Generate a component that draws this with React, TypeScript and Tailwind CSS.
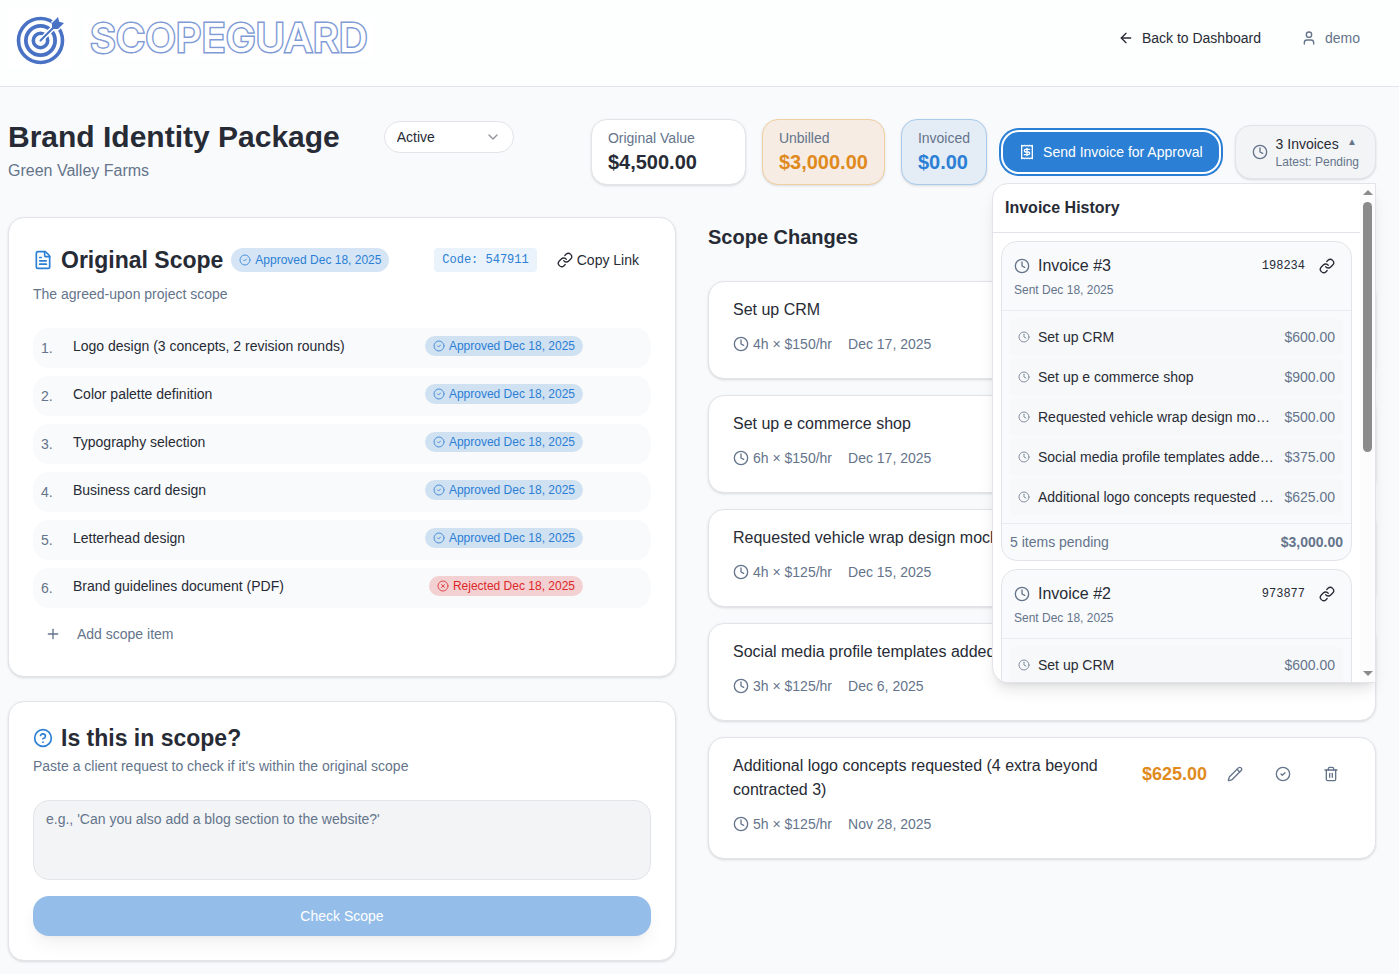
import { useId, type ReactNode } from "react";
import {
  ArrowLeft,
  ChevronDown,
  CircleCheck,
  CircleHelp,
  CircleX,
  Clock,
  FileText,
  Link,
  Pencil,
  Plus,
  Trash2,
  User,
} from "lucide-react";

type ScopeItem = { text: string; status: "Approved" | "Rejected" };
type Change = { title: string; hours: number; rate: number; date: string };
type InvoiceLine = { title: string; amount: number };
type Invoice = { number: number; code: string; sent: string; lines: InvoiceLine[] };

const scopeItems: ScopeItem[] = [
  { text: "Logo design (3 concepts, 2 revision rounds)", status: "Approved" },
  { text: "Color palette definition", status: "Approved" },
  { text: "Typography selection", status: "Approved" },
  { text: "Business card design", status: "Approved" },
  { text: "Letterhead design", status: "Approved" },
  { text: "Brand guidelines document (PDF)", status: "Rejected" },
];

const changes: Change[] = [
  { title: "Set up CRM", hours: 4, rate: 150, date: "Dec 17, 2025" },
  { title: "Set up e commerce shop", hours: 6, rate: 150, date: "Dec 17, 2025" },
  { title: "Requested vehicle wrap design mockup", hours: 4, rate: 125, date: "Dec 15, 2025" },
  { title: "Social media profile templates added to scope", hours: 3, rate: 125, date: "Dec 6, 2025" },
  {
    title: "Additional logo concepts requested (4 extra beyond contracted 3)",
    hours: 5,
    rate: 125,
    date: "Nov 28, 2025",
  },
];

const lines: InvoiceLine[] = changes.map((c) => ({ title: c.title, amount: c.hours * c.rate }));

const invoices: Invoice[] = [
  { number: 3, code: "198234", sent: "Dec 18, 2025", lines },
  { number: 2, code: "973877", sent: "Dec 18, 2025", lines: lines.slice(0, 4) },
];

const money = (value: number) =>
  "$" + value.toLocaleString("en-US", { minimumFractionDigits: 2, maximumFractionDigits: 2 });

function TargetLogo() {
  return (
    <svg viewBox="0 0 64 60" className="h-[60px] w-16" aria-hidden="true">
      <rect width="64" height="60" fill="#ffffff" />
      <g fill="none" stroke="#4a72c4">
        <circle cx="32.5" cy="32.5" r="22" strokeWidth="3.6" />
        <circle cx="32.5" cy="32.5" r="14.6" strokeWidth="3.8" />
        <circle cx="32.5" cy="32.5" r="7.2" strokeWidth="3.6" />
      </g>
      <path d="M32.5 32.5 49 16" stroke="#ffffff" strokeWidth="5" />
      <path d="M43 14 49 8 57 16 50 23Z" fill="#ffffff" />
      <path d="M32.5 32.5 48 17" stroke="#4a72c4" strokeWidth="2" strokeLinecap="round" />
      <path d="M44 19.5V15l6-6 1.2 4.8L56 15l-6 6h-4.6z" fill="#4a72c4" />
    </svg>
  );
}

function InvoiceIcon() {
  return (
    <svg
      viewBox="0 0 24 24"
      className="size-4"
      fill="none"
      stroke="currentColor"
      strokeWidth="2"
      strokeLinecap="round"
      strokeLinejoin="round"
      aria-hidden="true"
    >
      <path d="M4 2v20l2-1 2 1 2-1 2 1 2-1 2 1 2-1 2 1V2l-2 1-2-1-2 1-2-1-2 1-2-1-2 1Z" />
      <path d="M16 8h-6a2 2 0 1 0 0 4h4a2 2 0 1 1 0 4H8" />
      <path d="M12 17.5v-11" />
    </svg>
  );
}

function Card({ className = "", children }: { className?: string; children: ReactNode }) {
  return (
    <section className={`rounded-2xl border border-[#e2e4e9] bg-white shadow-sm ${className}`}>{children}</section>
  );
}

function StatusBadge({ status, className }: { status: ScopeItem["status"]; className: string }) {
  const approved = status === "Approved";
  const Icon = approved ? CircleCheck : CircleX;
  return (
    <span
      className={`inline-flex shrink-0 items-center gap-1 rounded-full px-2 text-xs ${
        approved ? "text-[#2b7fd4]" : "text-[#dc2828]"
      } ${className}`}
    >
      <Icon className="size-3 opacity-80" />
      {status} Dec 18, 2025
    </span>
  );
}

function Stat({ label, value, className }: { label: string; value: string; className: string }) {
  return (
    <div className={`rounded-2xl border py-2 pl-4 ${className}`}>
      <p className="text-sm text-[#64748b]">{label}</p>
      <p className="text-xl font-bold">{value}</p>
    </div>
  );
}

function Header() {
  return (
    <header className="border-b border-[#e2e4e9] bg-[#fdfefe] pt-2 pr-[23px] pb-[18px] pl-2">
      <div className="flex h-[60px] items-center justify-between">
        <a href="#home" className="flex items-center gap-3">
          <TargetLogo />
          <span className="bg-white px-1.5 font-['Inter'] text-[40px] leading-10 font-medium text-white [-webkit-text-stroke:3px_#7f9bd6] [paint-order:stroke_fill]">
            SCOPEGUARD
          </span>
        </a>
        <nav className="flex items-center gap-10 pr-4 text-sm">
          <a href="#dashboard" className="flex items-center gap-2">
            <ArrowLeft className="size-4" />
            Back to Dashboard
          </a>
          <span className="flex items-center gap-2 text-[#64748b]">
            <User className="size-4" />
            demo
          </span>
        </nav>
      </div>
    </header>
  );
}

function InvoiceCard({ invoice }: { invoice: Invoice }) {
  const total = invoice.lines.reduce((sum, line) => sum + line.amount, 0);
  return (
    <article className="overflow-hidden rounded-2xl border border-[#e2e4e9] bg-[#f9fafc]">
      <div className="border-b border-[#eaecf0] p-3">
        <div className="flex items-center justify-between">
          <h3 className="flex items-center gap-2">
            <Clock className="size-4 text-[#64748b]" />
            Invoice #{invoice.number}
          </h3>
          <div className="flex items-center gap-2.5">
            <code className="font-['Liberation_Mono',monospace] text-xs">{invoice.code}</code>
            <button type="button" aria-label="Copy invoice link" className="grid size-6 place-items-center">
              <Link className="size-4" />
            </button>
          </div>
        </div>
        <p className="mt-1 text-xs text-[#64748b]">Sent {invoice.sent}</p>
      </div>
      <ul className="flex flex-col gap-1 p-2 text-sm">
        {invoice.lines.map((line) => (
          <li key={line.title} className="flex items-center gap-2 rounded-sm bg-[#f7f8fa] p-2">
            <Clock className="size-3 shrink-0 text-[#64748b] opacity-80" />
            <span className="min-w-0 flex-1 truncate">{line.title}</span>
            <span className="text-[#64748b]">{money(line.amount)}</span>
          </li>
        ))}
      </ul>
      <div className="flex justify-between border-t border-[#eaecf0] p-2 text-sm text-[#64748b]">
        <span>{invoice.lines.length} items pending</span>
        <strong className="font-bold">{money(total)}</strong>
      </div>
    </article>
  );
}

function InvoiceHistory() {
  return (
    <div className="absolute top-full right-0 z-10 mt-1 flex h-[500px] w-96 overflow-hidden rounded-l-2xl border border-[#e2e4e9] bg-white shadow-lg">
      <div className="min-w-0 flex-1 overflow-y-auto [scrollbar-width:none]">
        <h2 className="border-b border-[#e2e4e9] p-3 font-bold">Invoice History</h2>
        <div className="flex flex-col gap-2 p-2">
          {invoices.map((invoice) => (
            <InvoiceCard key={invoice.number} invoice={invoice} />
          ))}
        </div>
      </div>
      <div className="flex w-[15px] flex-col items-center bg-[#fcfcfc] py-1.5" aria-hidden="true">
        <svg viewBox="0 0 10 5" className="h-[5px] w-2.5">
          <path d="M0 5 5 0l5 5z" fill="#8b8b8b" />
        </svg>
        <div className="mt-[7px] h-[250px] w-[9px] rounded-full bg-[#8b8b8b]" />
        <svg viewBox="0 0 10 5" className="mt-auto h-[5px] w-2.5">
          <path d="M0 0 5 5l5-5z" fill="#8b8b8b" />
        </svg>
      </div>
    </div>
  );
}

function ProjectBar() {
  return (
    <div className="flex items-center justify-between gap-4">
      <div className="flex flex-1 flex-col gap-1 self-start">
        <div className="flex items-center gap-11">
          <h1 className="text-3xl font-bold whitespace-nowrap">Brand Identity Package</h1>
          <div className="relative">
            <select
              aria-label="Project status"
              className="h-8 w-[130px] appearance-none rounded-full border border-[#e2e4e9] bg-white px-3 text-sm"
              defaultValue="Active"
            >
              <option>Active</option>
              <option>Completed</option>
            </select>
            <ChevronDown className="pointer-events-none absolute top-2 right-[13px] size-4 opacity-50" />
          </div>
        </div>
        <p className="text-[#64748b]">Green Valley Farms</p>
      </div>
      <Stat label="Original Value" value="$4,500.00" className="border-[#e2e4e9] bg-white pr-12 shadow-sm" />
      <Stat
        label="Unbilled"
        value="$3,000.00"
        className="border-[#f0cfa2] bg-[#f6ece3] pr-4 shadow-sm [&>p:last-child]:text-[#e08a1e]"
      />
      <Stat
        label="Invoiced"
        value="$0.00"
        className="border-[#aacbec] bg-[#e4ecf6] pr-4 shadow-sm [&>p:last-child]:text-[#2b7fd4]"
      />
      <button
        type="button"
        className="flex h-10 items-center gap-2 rounded-2xl bg-[#2b7fd4] px-4 text-sm whitespace-nowrap text-white ring-2 ring-[#2b7fd4] ring-offset-2"
      >
        <InvoiceIcon />
        Send Invoice for Approval
      </button>
      <div className="relative">
        <button
          type="button"
          aria-expanded="true"
          className="flex items-center gap-2 rounded-2xl border border-[#e2e4e9] bg-[#f3f4f6] px-4 py-2 text-left whitespace-nowrap shadow-sm"
        >
          <Clock className="size-4 text-[#64748b]" />
          <span className="flex flex-col">
            <span className="flex items-start justify-between text-sm">
              3 Invoices
              <span className="pr-0.5 text-[10px] leading-4 text-[#64748b]">▲</span>
            </span>
            <span className="text-xs text-[#64748b]">Latest: Pending</span>
          </span>
        </button>
        <InvoiceHistory />
      </div>
    </div>
  );
}

function OriginalScope() {
  return (
    <Card className="p-6">
      <div className="flex h-9 items-center justify-between">
        <div className="flex items-center gap-2">
          <FileText className="size-5 text-[#2b7fd4]" />
          <h2 className="text-[23px] leading-6 font-bold">Original Scope</h2>
          <StatusBadge status="Approved" className="h-6 bg-[#d5e5f6]" />
        </div>
        <div className="flex items-center gap-2">
          <code className="h-6 rounded bg-[#eaf2fb] px-2 font-['Liberation_Mono',monospace] text-xs leading-6 text-[#2b7fd4]">
            Code: 547911
          </code>
          <button type="button" className="flex h-9 items-center gap-1 px-3 text-sm">
            <Link className="size-4" />
            Copy Link
          </button>
        </div>
      </div>
      <p className="mt-1.5 text-sm text-[#64748b]">The agreed-upon project scope</p>
      <ol className="mt-6 flex flex-col gap-2 text-sm">
        {scopeItems.map((item, index) => (
          <li key={item.text} className="flex h-10 items-start gap-2 rounded-2xl bg-[#f9fafc] p-2">
            <span className="w-6 pt-0.5 text-[#64748b]">{index + 1}.</span>
            <span className="flex-1">{item.text}</span>
            <StatusBadge
              status={item.status}
              className={item.status === "Approved" ? "mr-[60px] h-5 bg-[#d0e1f2]" : "mr-[60px] h-5 bg-[#f3d0d2]"}
            />
          </li>
        ))}
      </ol>
      <button type="button" className="mt-2 flex h-9 items-center gap-4 px-3 text-sm text-[#64748b]">
        <Plus className="size-4" />
        Add scope item
      </button>
    </Card>
  );
}

function ScopeCheck() {
  const id = useId();
  return (
    <Card className="p-6">
      <h2 className="flex items-center gap-2 text-[23px] leading-6 font-bold">
        <CircleHelp className="size-5 text-[#2b7fd4]" />
        Is this in scope?
      </h2>
      <label htmlFor={id} className="mt-1.5 block text-sm text-[#64748b]">
        Paste a client request to check if it's within the original scope
      </label>
      <textarea
        id={id}
        placeholder="e.g., 'Can you also add a blog section to the website?'"
        className="mt-6 block h-20 w-full resize-none rounded-2xl border border-[#e2e4e9] bg-[#f3f4f6] px-3 py-2 text-sm placeholder:text-[#64748b]"
      />
      <button
        type="button"
        disabled
        className="mt-4 h-10 w-full rounded-2xl bg-[#2b7fd4] text-sm text-white opacity-50 shadow-lg"
      >
        Check Scope
      </button>
    </Card>
  );
}

function ChangeCard({ change }: { change: Change }) {
  return (
    <Card className="px-6 pt-4 pb-6">
      <div className="flex items-start gap-2">
        <h3 className="flex-1 pr-6">{change.title}</h3>
        <div className="-mb-4 flex items-center gap-2 text-[#64748b]">
          <span className="text-lg font-bold text-[#e08a1e]">{money(change.hours * change.rate)}</span>
          <button type="button" aria-label="Edit change" className="grid size-10 place-items-center">
            <Pencil className="size-4" />
          </button>
          <button type="button" aria-label="Approve change" className="grid size-10 place-items-center">
            <CircleCheck className="size-4" />
          </button>
          <button type="button" aria-label="Delete change" className="grid size-10 place-items-center">
            <Trash2 className="size-4" />
          </button>
        </div>
      </div>
      <div className="mt-3 flex items-center gap-4 text-sm text-[#64748b]">
        <span className="flex items-center gap-1">
          <Clock className="size-4" />
          {change.hours}h × ${change.rate}/hr
        </span>
        <span>{change.date}</span>
      </div>
    </Card>
  );
}

export default function App() {
  return (
    <div className="min-h-screen bg-[#f9fafc] font-['Liberation_Sans',Arial,sans-serif] text-base text-[#272b35]">
      <Header />
      <main className="py-8 pr-[23px] pb-3 pl-2">
        <ProjectBar />
        <div className="mt-8 grid grid-cols-2 items-start gap-8">
          <div className="flex flex-col gap-6">
            <OriginalScope />
            <ScopeCheck />
          </div>
          <div>
            <h2 className="text-xl leading-10 font-bold">Scope Changes</h2>
            <div className="mt-6 flex flex-col gap-4">
              {changes.map((change) => (
                <ChangeCard key={change.title} change={change} />
              ))}
            </div>
          </div>
        </div>
      </main>
    </div>
  );
}
